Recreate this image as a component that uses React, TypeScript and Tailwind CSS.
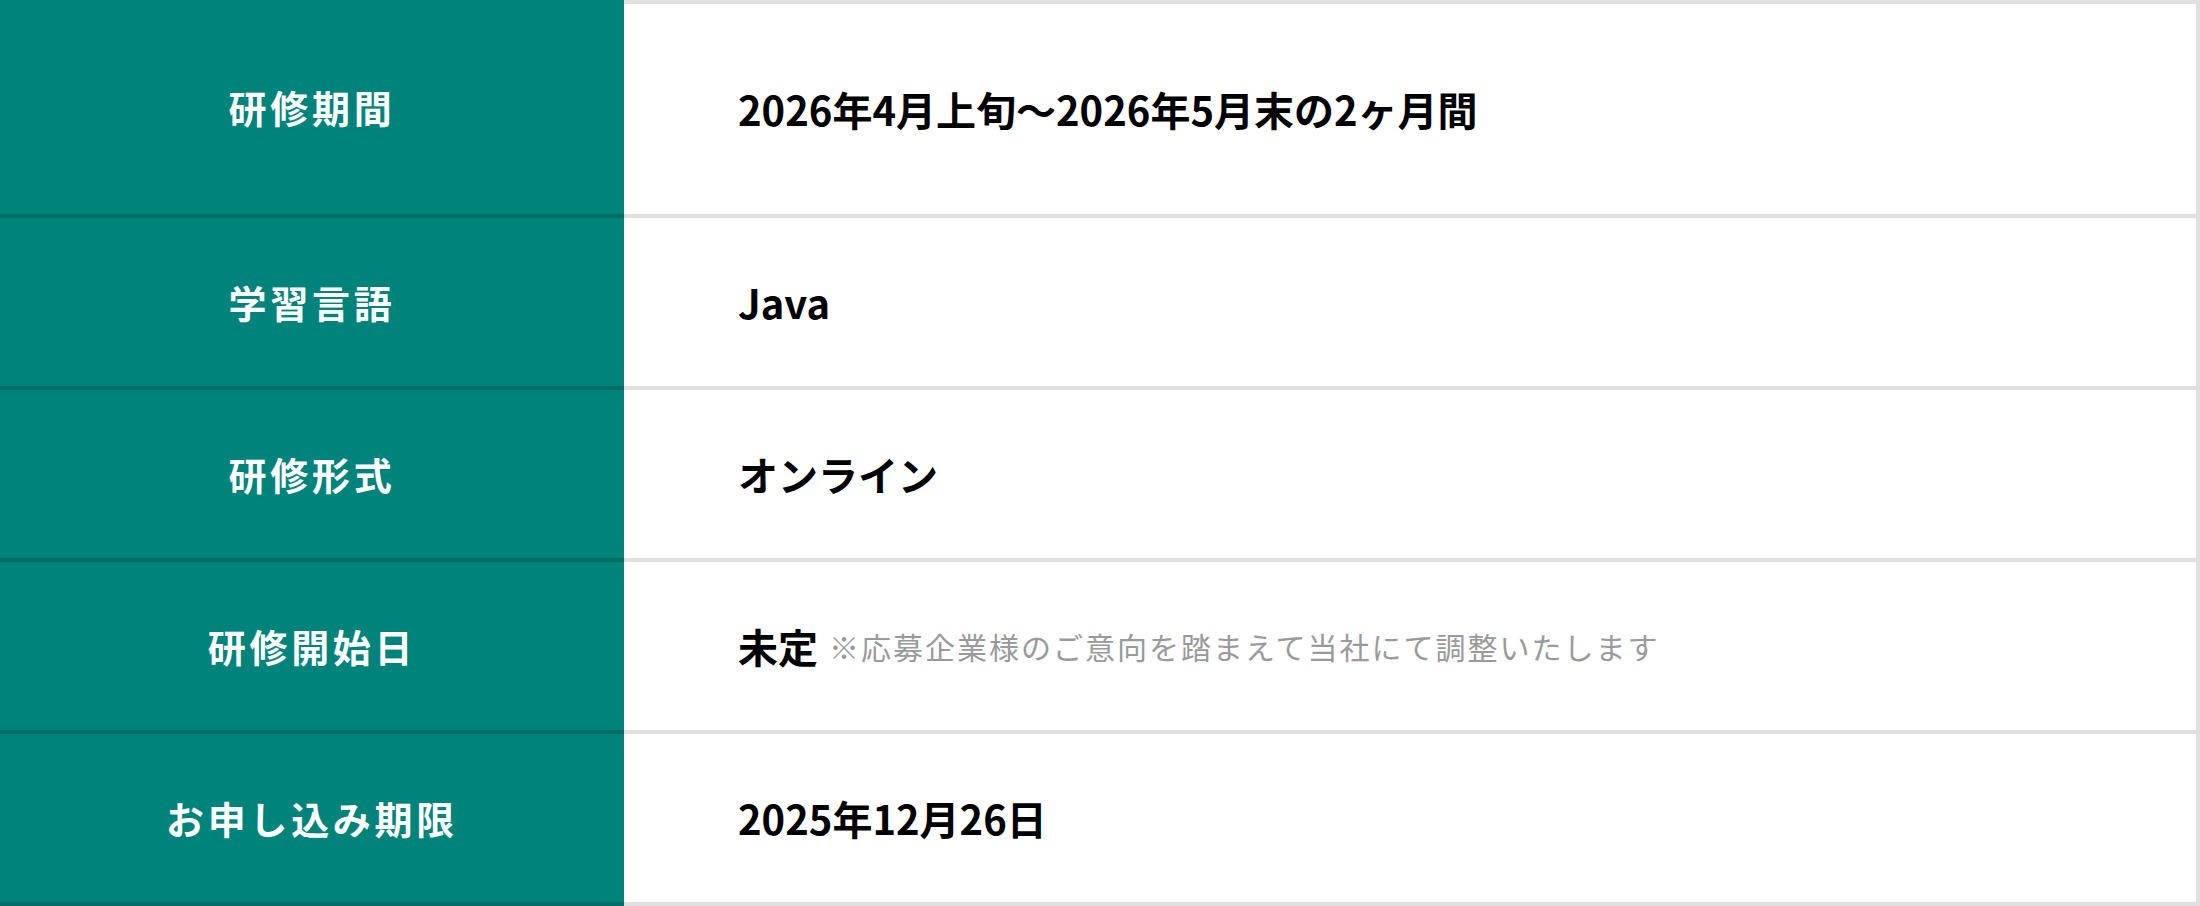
const rows = [
  { label: '研修期間', value: '2026年4月上旬〜2026年5月末の2ヶ月間' },
  { label: '学習言語', value: 'Java' },
  { label: '研修形式', value: 'オンライン' },
  { label: '研修開始日', value: '未定', note: '※応募企業様のご意向を踏まえて当社にて調整いたします' },
  { label: 'お申し込み期限', value: '2025年12月26日' },
]

export default function App() {
  return (
    <div
      className="w-[2200px] h-[906px] bg-white"
      style={{ fontFamily: '"Noto Sans CJK JP", "Noto Sans", sans-serif' }}
    >
      {rows.map((row, i) => (
        <div key={row.label} className="flex">
          <div className="w-[624px] shrink-0 flex items-center justify-center bg-[#00837a] border-b-4 border-[#006f67] text-white font-bold text-[38px] tracking-[3.7px] leading-none">
            {row.label}
          </div>
          <div
            className={`flex-1 flex items-center pl-[114px] border-b-4 border-r-4 border-[#e0e0e0] ${
              i === 0 ? 'h-[218px] border-t-4' : 'h-[172px]'
            }`}
          >
            <span className="font-bold text-[40px] leading-none text-black">{row.value}</span>
            {row.note && (
              <span className="ml-[11px] text-[30px] tracking-[2px] leading-none text-[#9a9a9a]">{row.note}</span>
            )}
          </div>
        </div>
      ))}
    </div>
  )
}
